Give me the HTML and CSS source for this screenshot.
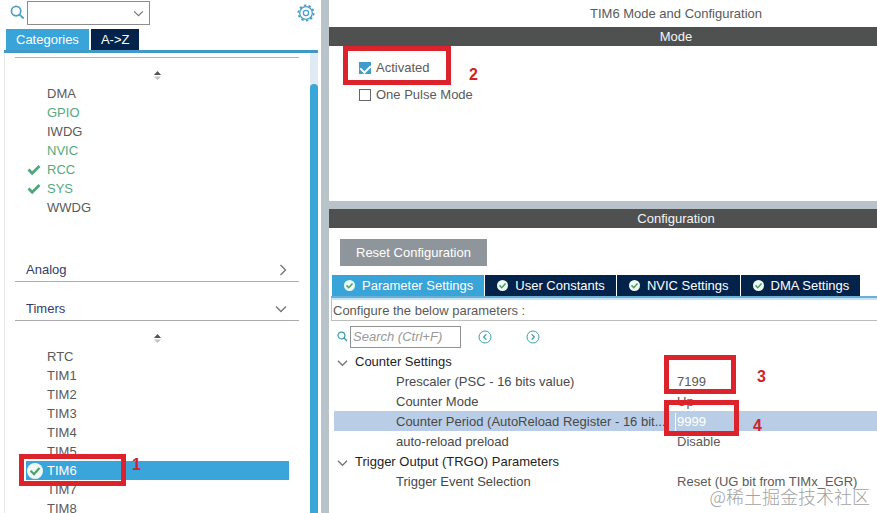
FILE: index.html
```
<!DOCTYPE html>
<html lang="en">
<head>
    <title>TIM6 Mode and Configuration</title>
    <meta charset="UTF-8">
    <meta name="viewport" content="width=device-width, initial-scale=1.0">
    <link rel="stylesheet" href="styles.css">
</head>
<body>

<!-- Shared icons -->
<svg class="sprite" aria-hidden="true">
    <symbol id="icon-search" viewBox="0 0 16 16">
        <circle cx="6.5" cy="6.5" r="5" fill="none" stroke="currentColor" stroke-width="1.8"/>
        <path d="M10.2 10.2L14.6 14.4" fill="none" stroke="currentColor" stroke-width="2"/>
    </symbol>
    <symbol id="icon-down" viewBox="0 0 12 8">
        <path d="M1 1.5L6 6.5L11 1.5" fill="none" stroke="currentColor" stroke-width="1.4"/>
    </symbol>
    <symbol id="icon-right" viewBox="0 0 8 12">
        <path d="M1.5 1L6.5 6L1.5 11" fill="none" stroke="currentColor" stroke-width="1.4"/>
    </symbol>
    <symbol id="icon-sort" viewBox="0 0 10 12">
        <path d="M1 5.5L5 1L9 5.5Z" fill="#555555"/>
        <path d="M1 7L5 11L9 7Z" fill="#c4c4c4"/>
    </symbol>
    <symbol id="icon-check" viewBox="0 0 14 12">
        <path d="M1.5 5.5L5.2 9.2L12.5 2" fill="none" stroke="#4ea87c" stroke-width="2.8"/>
    </symbol>
    <symbol id="icon-ok" viewBox="0 0 16 16">
        <circle cx="8" cy="8" r="8" fill="#eefaf2"/>
        <path d="M3.6 7.8L7 11.2L12.4 5" fill="none" stroke="#4ba06c" stroke-width="2.2"/>
    </symbol>
</svg>

<div class="app">
    <aside class="sidebar">
        <div class="finder">
            <svg class="finder-icon" aria-hidden="true"><use href="#icon-search"/></svg>
            <div class="combo">
                <select aria-label="Search peripheral"><option></option></select>
                <svg class="combo-arrow" aria-hidden="true"><use href="#icon-down"/></svg>
            </div>
            <button class="gear" type="button" aria-label="Options">
                <svg viewBox="0 0 18 18" aria-hidden="true">
                    <circle cx="9" cy="9" r="7.6" fill="none" stroke="currentColor" stroke-width="1.8" stroke-dasharray="2.4 2.375"/>
                    <circle cx="9" cy="9" r="6.3" fill="none" stroke="currentColor" stroke-width="1.3"/>
                    <circle cx="9" cy="9" r="2.6" fill="none" stroke="currentColor" stroke-width="1.3"/>
                </svg>
            </button>
        </div>

        <div class="side-tabs">
            <button class="side-tab active" type="button">Categories</button>
            <button class="side-tab" type="button">A-&gt;Z</button>
        </div>

        <div class="side-body">
            <nav class="tree">
                <svg class="sort" aria-hidden="true"><use href="#icon-sort"/></svg>
                <ul class="items system">
                    <li><a href="#dma">DMA</a></li>
                    <li><a class="used" href="#gpio">GPIO</a></li>
                    <li><a href="#iwdg">IWDG</a></li>
                    <li><a class="used" href="#nvic">NVIC</a></li>
                    <li><a class="used" href="#rcc"><svg class="check" aria-hidden="true"><use href="#icon-check"/></svg>RCC</a></li>
                    <li><a class="used" href="#sys"><svg class="check" aria-hidden="true"><use href="#icon-check"/></svg>SYS</a></li>
                    <li><a href="#wwdg">WWDG</a></li>
                </ul>
                <button class="group" type="button">Analog
                    <svg class="arrow-right" aria-hidden="true"><use href="#icon-right"/></svg>
                </button>
                <button class="group" type="button">Timers
                    <svg class="arrow-down" aria-hidden="true"><use href="#icon-down"/></svg>
                </button>
                <svg class="sort" aria-hidden="true"><use href="#icon-sort"/></svg>
                <ul class="items">
                    <li><a href="#rtc">RTC</a></li>
                    <li><a href="#tim1">TIM1</a></li>
                    <li><a href="#tim2">TIM2</a></li>
                    <li><a href="#tim3">TIM3</a></li>
                    <li><a href="#tim4">TIM4</a></li>
                    <li><a href="#tim5">TIM5</a></li>
                    <li class="selected">
                        <a href="#tim6"><svg class="ok" aria-hidden="true"><use href="#icon-ok"/></svg>TIM6</a>
                        <span class="mark mark-1"></span>
                        <span class="step step-1">1</span>
                    </li>
                    <li><a href="#tim7">TIM7</a></li>
                    <li><a href="#tim8">TIM8</a></li>
                </ul>
            </nav>
            <div class="scrollbar"><div class="thumb"></div></div>
        </div>
    </aside>

    <main class="content">
        <section class="mode">
            <h1>TIM6 Mode and Configuration</h1>
            <h2>Mode</h2>
            <div class="options">
                <div class="option">
                    <input type="checkbox" id="activated" checked>
                    <label for="activated">Activated</label>
                    <span class="mark mark-2"></span>
                    <span class="step step-2">2</span>
                </div>
                <div class="option">
                    <input type="checkbox" id="onePulse">
                    <label for="onePulse">One Pulse Mode</label>
                </div>
            </div>
        </section>

        <section class="config">
            <h2>Configuration</h2>
            <button class="reset" type="button">Reset Configuration</button>
            <div class="tabs">
                <button class="tab active" type="button"><svg aria-hidden="true"><use href="#icon-ok"/></svg>Parameter Settings</button>
                <button class="tab" type="button"><svg aria-hidden="true"><use href="#icon-ok"/></svg>User Constants</button>
                <button class="tab" type="button"><svg aria-hidden="true"><use href="#icon-ok"/></svg>NVIC Settings</button>
                <button class="tab" type="button"><svg aria-hidden="true"><use href="#icon-ok"/></svg>DMA Settings</button>
            </div>
            <p class="hint">Configure the below parameters :</p>
            <div class="search">
                <svg class="search-icon" aria-hidden="true"><use href="#icon-search"/></svg>
                <input type="text" placeholder="Search (Ctrl+F)" aria-label="Search parameters">
                <button type="button" aria-label="Previous">
                    <svg viewBox="0 0 14 14" aria-hidden="true"><circle cx="7" cy="7" r="6" fill="none" stroke="currentColor"/><path d="M8.3 4.4L5.7 7L8.3 9.6" fill="none" stroke="currentColor" stroke-width="1.3"/></svg>
                </button>
                <button type="button" aria-label="Next">
                    <svg viewBox="0 0 14 14" aria-hidden="true"><circle cx="7" cy="7" r="6" fill="none" stroke="currentColor"/><path d="M5.7 4.4L8.3 7L5.7 9.6" fill="none" stroke="currentColor" stroke-width="1.3"/></svg>
                </button>
            </div>

            <table class="params">
                <colgroup>
                    <col class="name-col">
                    <col>
                </colgroup>
                <tr class="heading">
                    <th colspan="2"><svg aria-hidden="true"><use href="#icon-down"/></svg>Counter Settings</th>
                </tr>
                <tr>
                    <td>Prescaler (PSC - 16 bits value)</td>
                    <td class="value">7199<span class="mark mark-3"></span><span class="step step-3">3</span></td>
                </tr>
                <tr>
                    <td>Counter Mode</td>
                    <td class="value">Up</td>
                </tr>
                <tr class="current">
                    <td><label for="period">Counter Period (AutoReload Register - 16 bit...</label></td>
                    <td class="value"><input type="text" id="period" value="9999"><span class="mark mark-4"></span><span class="step step-4">4</span></td>
                </tr>
                <tr>
                    <td>auto-reload preload</td>
                    <td class="value">Disable</td>
                </tr>
                <tr class="heading">
                    <th colspan="2"><svg aria-hidden="true"><use href="#icon-down"/></svg>Trigger Output (TRGO) Parameters</th>
                </tr>
                <tr>
                    <td>Trigger Event Selection</td>
                    <td class="value">Reset (UG bit from TIMx_EGR)</td>
                </tr>
            </table>
        </section>
        <div class="watermark">@稀土掘金技术社区</div>
    </main>
</div>

</body>
</html>
```
FILE: styles.css
```
/* Global styles */
* {
    box-sizing: border-box;
}

body {
    margin: 0;
    background-color: #ffffff;
    color: #5a5a5a;
    font-family: "Liberation Sans", Arial, sans-serif;
    font-size: 13px;
}

button, input, select {
    font: inherit;
    border: none;
    border-radius: 0;
    padding: 0;
    margin: 0;
    background: none;
}

a {
    color: inherit;
    text-decoration: none;
}

h1, h2, p, ul {
    margin: 0;
    padding: 0;
    font-size: 13px;
    font-weight: normal;
}

ul {
    list-style: none;
}

svg {
    display: block;
    flex: none;
}

.sprite {
    position: absolute;
    width: 0;
    height: 0;
}

.app {
    display: grid;
    grid-template-columns: 321px 1fr;
    height: 100vh;
    overflow: hidden;
}

/* Sidebar */
.sidebar {
    display: flex;
    flex-direction: column;
    min-height: 0;
    padding: 0 3px 0 4px;
}

.finder {
    display: flex;
    align-items: center;
    gap: 2px;
    height: 25px;
    padding: 0 3px 0 6px;
}

.finder-icon {
    width: 15px;
    height: 15px;
    color: #4c9fc6;
}

.combo {
    position: relative;
    width: 123px;
}

.combo select {
    display: block;
    appearance: none;
    width: 100%;
    height: 24px;
    border: 1px solid #8c8c8c;
}

.combo-arrow {
    position: absolute;
    right: 6px;
    top: 9px;
    width: 11px;
    height: 7px;
    color: #777777;
    pointer-events: none;
}

.gear {
    width: 18px;
    height: 18px;
    margin-left: auto;
    color: #4b9fcb;
}

.side-tabs {
    display: flex;
    gap: 2px;
    margin-top: 4px;
    padding-left: 2px;
    border-bottom: 3px solid #4099c6;
}

.side-tab {
    height: 21px;
    padding: 0 10px;
    background-color: #03234b;
    color: #ffffff;
}

.side-tab.active {
    background-color: #39a4d8;
}

.side-body {
    display: flex;
    flex: 1;
    min-height: 0;
    border-left: 1px solid #e6e8ea;
}

.tree {
    flex: 1;
    margin: 4px 11px 0 10px;
    border-top: 1px solid #b4b4b8;
}

.sort {
    width: 9px;
    height: 11px;
    margin: 12px auto 3px;
}

.items li {
    position: relative;
    height: 19px;
    margin: 0 10px 0 11px;
    line-height: 18px;
}

.items a {
    display: flex;
    align-items: center;
    position: relative;
    padding: 1px 0 0 21px;
}

.items .used {
    color: #55a97f;
}

.system {
    padding-bottom: 41px;
}

.check {
    position: absolute;
    left: 1px;
    width: 14px;
    height: 12px;
}

.ok {
    position: absolute;
    left: 1px;
    width: 16px;
    height: 16px;
}

.items .selected {
    background-color: #3aa5da;
    color: #ffffff;
    z-index: 1;
}

.group {
    display: flex;
    align-items: center;
    justify-content: space-between;
    width: 100%;
    height: 24px;
    padding: 0 12px 0 11px;
    border-bottom: 1px solid #a9acb0;
    color: #343c66;
}

.group + .group {
    margin-top: 15px;
}

.arrow-right {
    width: 8px;
    height: 12px;
    color: #777777;
}

.arrow-down {
    width: 12px;
    height: 8px;
    color: #777777;
}

.scrollbar {
    width: 8px;
    padding-top: 31px;
    background-color: #dfeaf5;
}

.thumb {
    height: 100%;
    border-radius: 4px 4px 0 0;
    background-color: #3aa5d8;
}

/* Right side */
.content {
    position: relative;
    min-width: 0;
    border-left: 8px solid #b8c3ca;
}

.mode {
    height: 209px;
    border-bottom: 8px solid #b9c1c9;
}

h1 {
    padding-left: 146px;
    line-height: 27px;
    text-align: center;
}

h2 {
    height: 19px;
    padding-left: 146px;
    background-color: #4f5151;
    color: #f4f4f4;
    line-height: 20px;
    text-align: center;
}

.options {
    padding: 8px 0 0 30px;
}

.option {
    position: relative;
    display: flex;
    align-items: center;
    gap: 5px;
    height: 27px;
}

.option input {
    appearance: none;
    width: 12px;
    height: 12px;
    border: 1px solid #666666;
}

.option input:checked {
    display: grid;
    place-items: center;
    border-color: #3f9bcb;
    background: #3f9bcb;
}

.option input:checked::before {
    content: "";
    width: 5px;
    height: 8px;
    margin-bottom: 2px;
    border: solid #ffffff;
    border-width: 0 2px 2px 0;
    transform: rotate(45deg);
}

.reset {
    display: block;
    height: 27px;
    margin: 11px 0 9px 11px;
    padding: 0 16px;
    background-color: #8f969b;
    color: #ffffff;
}

.tabs {
    display: flex;
    gap: 1px;
    margin-left: 2px;
    padding-left: 1px;
    border-bottom: 2px solid #69afd6;
}

.tab {
    display: flex;
    align-items: center;
    gap: 7px;
    height: 21px;
    padding: 0 11px 0 12px;
    background-color: #03234b;
    color: #ffffff;
    white-space: nowrap;
}

.tab.active {
    background-color: #38a4d8;
}

.tab svg {
    width: 11px;
    height: 11px;
}

.hint {
    height: 23px;
    margin-left: 2px;
    padding-left: 1px;
    border: 1px solid #bdbdbd;
    border-top: 2px solid #c4e3f4;
    border-right: none;
    line-height: 22px;
}

.search {
    display: flex;
    align-items: center;
    gap: 2px;
    margin: 4px 0 3px 8px;
    height: 23px;
}

.search-icon {
    width: 11px;
    height: 11px;
    color: #399cab;
}

.search input {
    width: 111px;
    height: 22px;
    padding: 0 2px;
    border: 1px solid #929292;
}

.search input::placeholder {
    color: #999999;
    font-style: italic;
    opacity: 1;
}

.search button {
    width: 14px;
    height: 14px;
    margin-left: 15px;
    color: #3ba3ac;
}

.search button + button {
    margin-left: 32px;
}

/* Parameters */
.params {
    width: calc(100% - 5px);
    margin-left: 5px;
    border-collapse: collapse;
    table-layout: fixed;
}

.name-col {
    width: 63%;
}

.params tr {
    height: 20px;
}

.params th, .params td {
    padding: 2px 0 0;
    line-height: 18px;
    font-weight: normal;
    text-align: left;
    white-space: nowrap;
}

.params td {
    padding-left: 62px;
    color: #484848;
}

.heading th {
    color: #1e1e1e;
}

.heading svg {
    display: inline-block;
    width: 11px;
    height: 8px;
    margin: 0 7px 0 3px;
    color: #777777;
    vertical-align: middle;
}

.params .value {
    position: relative;
    padding-left: 1px;
    color: #5a5a5a;
}

.params .current {
    background-color: #b9cee6;
}

.value input {
    display: block;
    width: 60px;
    height: 18px;
    margin-left: -2px;
    padding: 0 0 0 1px;
    border-left: 1px solid #ffffff;
    color: #ffffff;
}

/* Numbered steps drawn over the panels */
.mark {
    position: absolute;
    border: 5px solid #dc222b;
    pointer-events: none;
}

.step {
    position: absolute;
    color: #cf222c;
    font-family: "Liberation Sans", Arial, sans-serif;
    font-size: 16px;
    font-weight: bold;
    line-height: 20px;
}

.mark-1 {
    left: -7px;
    top: -7px;
    width: 107px;
    height: 32px;
}

.step-1 {
    left: 106px;
    top: -6px;
}

.mark-2 {
    left: -16px;
    top: -8px;
    width: 108px;
    height: 39px;
}

.step-2 {
    left: 110px;
    top: 11px;
}

.mark-3 {
    left: -12px;
    top: -16px;
    width: 72px;
    height: 39px;
}

.step-3 {
    left: 81px;
    top: -4px;
}

.mark-4 {
    left: -12px;
    top: -11px;
    width: 75px;
    height: 36px;
}

.step-4 {
    left: 77px;
    top: 5px;
}

.watermark {
    position: absolute;
    right: 7px;
    bottom: 4px;
    color: #a2a2a2;
    font-family: "Noto Sans CJK SC", sans-serif;
    font-size: 18px;
    font-weight: 300;
    line-height: 26px;
}
```
